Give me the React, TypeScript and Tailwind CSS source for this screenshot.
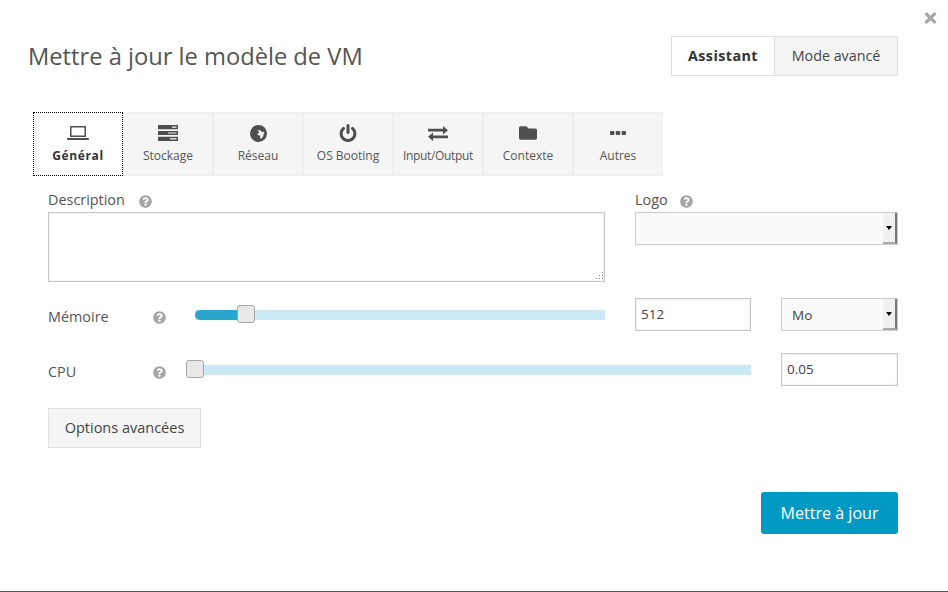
import { FaFolder, FaQuestionCircle } from "react-icons/fa";
import type { ReactNode } from "react";

// Icones dessinees a la main, les paquets n'ont pas ces glyphes dans ce style
function Laptop() {
    return (
        <svg viewBox="0 0 22 14" className="h-[14px] w-[22px]" fill="currentColor">
            <path fillRule="evenodd" d="M4 0h14a1 1 0 0 1 1 1v10H3V1a1 1 0 0 1 1-1zm.5 1.500v8h13v-8z" />
            <path d="M0 12h22v.4c0 .9-.7 1.600-1.600 1.600H1.600C.7 14 0 13.300 0 12.400z" />
        </svg>
    );
}

function Storage() {
    return (
        <svg viewBox="0 0 20 16" className="h-[16px] w-[20px]" fill="currentColor">
            <path fillRule="evenodd" d="M0 0h20v4.200H0zm14 1.500v1.200h4.500V1.500z" />
            <path fillRule="evenodd" d="M0 5.900h20v4.200H0zm10 1.500v1.200h8.500V7.400z" />
            <path fillRule="evenodd" d="M0 11.800h20V16H0zm12 1.500v1.200h6.500v-1.200z" />
        </svg>
    );
}

function Globe() {
    return (
        <svg viewBox="0 0 18 18" className="h-[17px] w-[17px]" fill="currentColor">
            <path
                fillRule="evenodd"
                d="M9 0a9 9 0 1 1 0 18A9 9 0 0 1 9 0zM7.500 5.500l1.800 1 .2 1.800-1.700 1 1.200 1.700 2 .2-.4 2.500 1.200.8 2.200-2.700.5-2.800 1.200-.6-1.800-1.400-1.700.5-.8-1.800-1.800-.2z"
            />
        </svg>
    );
}

function Power() {
    return (
        <svg viewBox="0 0 18 18" className="h-[18px] w-[18px]" fill="none" stroke="currentColor" strokeWidth="3" strokeLinecap="round">
            <path d="M9 1.600v7" />
            <path d="M4.500 4.400a6.900 6.900 0 1 0 9 0" />
        </svg>
    );
}

function Exchange() {
    return (
        <svg viewBox="0 0 20 15" className="h-[15px] w-[20px]" fill="currentColor">
            <path d="M0 2.800h15V0l5 4.200-5 4.200V5.600H0z" />
            <path d="M20 9.400H5V6.600L0 10.800 5 15v-2.800h15z" />
        </svg>
    );
}

function Dots() {
    return (
        <svg viewBox="0 0 16 4" className="h-[4px] w-[16px]" fill="currentColor">
            <rect x="0" width="4.400" height="4" rx="0.8" />
            <rect x="5.800" width="4.400" height="4" rx="0.8" />
            <rect x="11.600" width="4.400" height="4" rx="0.8" />
        </svg>
    );
}

function Close() {
    return (
        <svg viewBox="0 0 13 12" className="absolute left-[924px] top-[12px] h-[12px] w-[13px] text-[#a9a9a9]" stroke="currentColor" strokeWidth="3.200">
            <path d="M1.500 1l10 10M11.500 1l-10 10" />
        </svg>
    );
}

const tabs = [
    { label: "Général", icon: <Laptop />, active: true },
    { label: "Stockage", icon: <Storage /> },
    { label: "Réseau", icon: <Globe /> },
    { label: "OS Booting", icon: <Power /> },
    { label: "Input/Output", icon: <Exchange />, tight: true },
    { label: "Contexte", icon: <FaFolder className="h-[18px] w-[20px]" /> },
    { label: "Autres", icon: <Dots /> },
];

function Help({ className = "" }: { className?: string }) {
    return <FaQuestionCircle className={`h-[13px] w-[13px] text-[#a6a6a6] ${className}`} />;
}

function FakeSelect({ value, className = "" }: { value?: string; className?: string }) {
    return (
        <div className={`flex items-stretch border border-[#cccccc] bg-[#fafafa] ${className}`}>
            <span className="flex-1 self-center pl-[10px] pt-[1px] text-[13.5px] text-[#444]">{value}</span>
            <span className="flex w-[14px] items-center justify-center border-r-2 border-b-2 border-r-[#777] border-b-[#aaa] bg-[#f1f1f1]">
                <span className="h-0 w-0 border-x-[3.5px] border-t-[4px] border-x-transparent border-t-black" />
            </span>
        </div>
    );
}

function Slider({ percent, handle, className = "" }: { percent: number; handle: number; className?: string }) {
    return (
        <div className={`relative h-[10px] bg-[#cbe9f4] ${className}`}>
            <div className="h-full rounded-l-[5px] bg-[#2aa6cd]" style={{ width: `${percent}%` }} />
            <div
                className="absolute top-[-5px] h-[18px] w-[18px] rounded-[3px] border border-[#a5a5a5] bg-[#e8e8e8]"
                style={{ left: handle }}
            />
        </div>
    );
}

function Row({ children, className = "" }: { children: ReactNode; className?: string }) {
    return <div className={`flex items-center ${className}`}>{children}</div>;
}

export default function App() {
    return (
        <div className="relative flex h-[592px] w-[948px] flex-col overflow-hidden border-b border-[#555] bg-white font-['Open_Sans',sans-serif] text-[#555]">
            <Close />

            {/* Header */}
            <div className="mt-[36px] flex h-[40px] items-center justify-between pl-[28px] pr-[50px]">
                <h1 className="pt-[2px] text-[23.7px] font-normal text-[#555]">Mettre à jour le modèle de VM</h1>
                <div className="flex h-[40px] text-[14.3px]">
                    <div className="flex w-[104px] items-center justify-center border border-[#dfdfdf] bg-white pb-[1px] font-bold tracking-[0.45px] text-[#333]">Assistant</div>
                    <div className="flex w-[123px] items-center justify-center border border-l-0 border-[#dfdfdf] bg-[#f5f5f5] pb-[1px] text-[#444]">Mode avancé</div>
                </div>
            </div>

            {/* Onglets */}
            <div className="ml-[33px] mt-[36px] flex h-[64px]">
                {tabs.map((t) => (
                    <div
                        key={t.label}
                        className={`flex w-[90px] flex-col items-center pt-[11px] text-[12px] ${
                            t.active
                                ? "border border-dotted border-black bg-white font-bold tracking-[0.6px] text-[#333]"
                                : "border border-[#efefef] bg-[#f5f5f5] text-[#555]"
                        } ${t.tight ? "tracking-[-0.35px]" : ""}`}
                    >
                        <span className="flex h-[18px] items-center text-[#4f4f4f]">{t.icon}</span>
                        <span className="mt-[5px] leading-[17px]">{t.label}</span>
                    </div>
                ))}
            </div>

            {/* Formulaire */}
            <div className="ml-[48px] mr-[50px] mt-[14px] text-[14.4px]">
                <div className="flex">
                    <div className="w-[557px]">
                        <Row className="h-[22px] gap-[14px] pb-[2px]">
                            <span>Description</span>
                            <Help className="mt-[2px]" />
                        </Row>
                        <div className="relative h-[70px] border border-[#c8c8c8] bg-white shadow-[inset_0_0_2px_rgba(0,0,0,0.15)]">
                            {/* poignee de redimensionnement */}
                            <svg viewBox="0 0 10 10" className="absolute bottom-0 right-0 h-[10px] w-[10px] text-[#888]" fill="currentColor">
                                <rect x="8" y="1" width="1" height="1" />
                                <rect x="8" y="4" width="1" height="1" />
                                <rect x="5" y="4" width="1" height="1" />
                                <rect x="8" y="7" width="1" height="1" />
                                <rect x="5" y="7" width="1" height="1" />
                                <rect x="2" y="7" width="1" height="1" />
                            </svg>
                        </div>
                    </div>
                    <div className="ml-[30px] flex-1">
                        <Row className="h-[22px] gap-[12px] pb-[2px]">
                            <span>Logo</span>
                            <Help className="mt-[2px]" />
                        </Row>
                        <FakeSelect className="h-[33px]" />
                    </div>
                </div>

                <Row className="mt-[16px] h-[33px]">
                    <span className="w-[105px] pt-[4px]">Mémoire</span>
                    <Help className="mr-[29px] mt-[6px]" />
                    <Slider percent={12} handle={42} className="w-[410px]" />
                    <div className="ml-[30px] flex h-[33px] w-[116px] items-center border border-[#c8c8c8] pl-[5px] text-[13.5px] text-[#444] shadow-[inset_0_0_2px_rgba(0,0,0,0.15)]">512</div>
                    <FakeSelect value="Mo" className="ml-[30px] h-[33px] w-[117px]" />
                </Row>

                <Row className="mt-[22px] h-[33px]">
                    <span className="w-[105px] pt-[4px]">CPU</span>
                    <Help className="mr-[20px] mt-[6px]" />
                    <Slider percent={0} handle={0} className="w-[565px]" />
                    <div className="ml-[30px] flex h-[33px] w-[117px] items-center border border-[#c8c8c8] pl-[5px] text-[13.5px] text-[#444] shadow-[inset_0_0_2px_rgba(0,0,0,0.15)]">0.05</div>
                </Row>

                <button className="mt-[22px] flex h-[40px] w-[153px] items-center justify-center border border-[#dfdfdf] bg-[#f5f5f5] text-[14.5px] text-[#444]">
                    Options avancées
                </button>

                <div className="mt-[44px] flex justify-end">
                    <button className="h-[42px] w-[137px] rounded-[3px] bg-[#0099c3] text-[16.100px] text-white">Mettre à jour</button>
                </div>
            </div>
        </div>
    );
}
